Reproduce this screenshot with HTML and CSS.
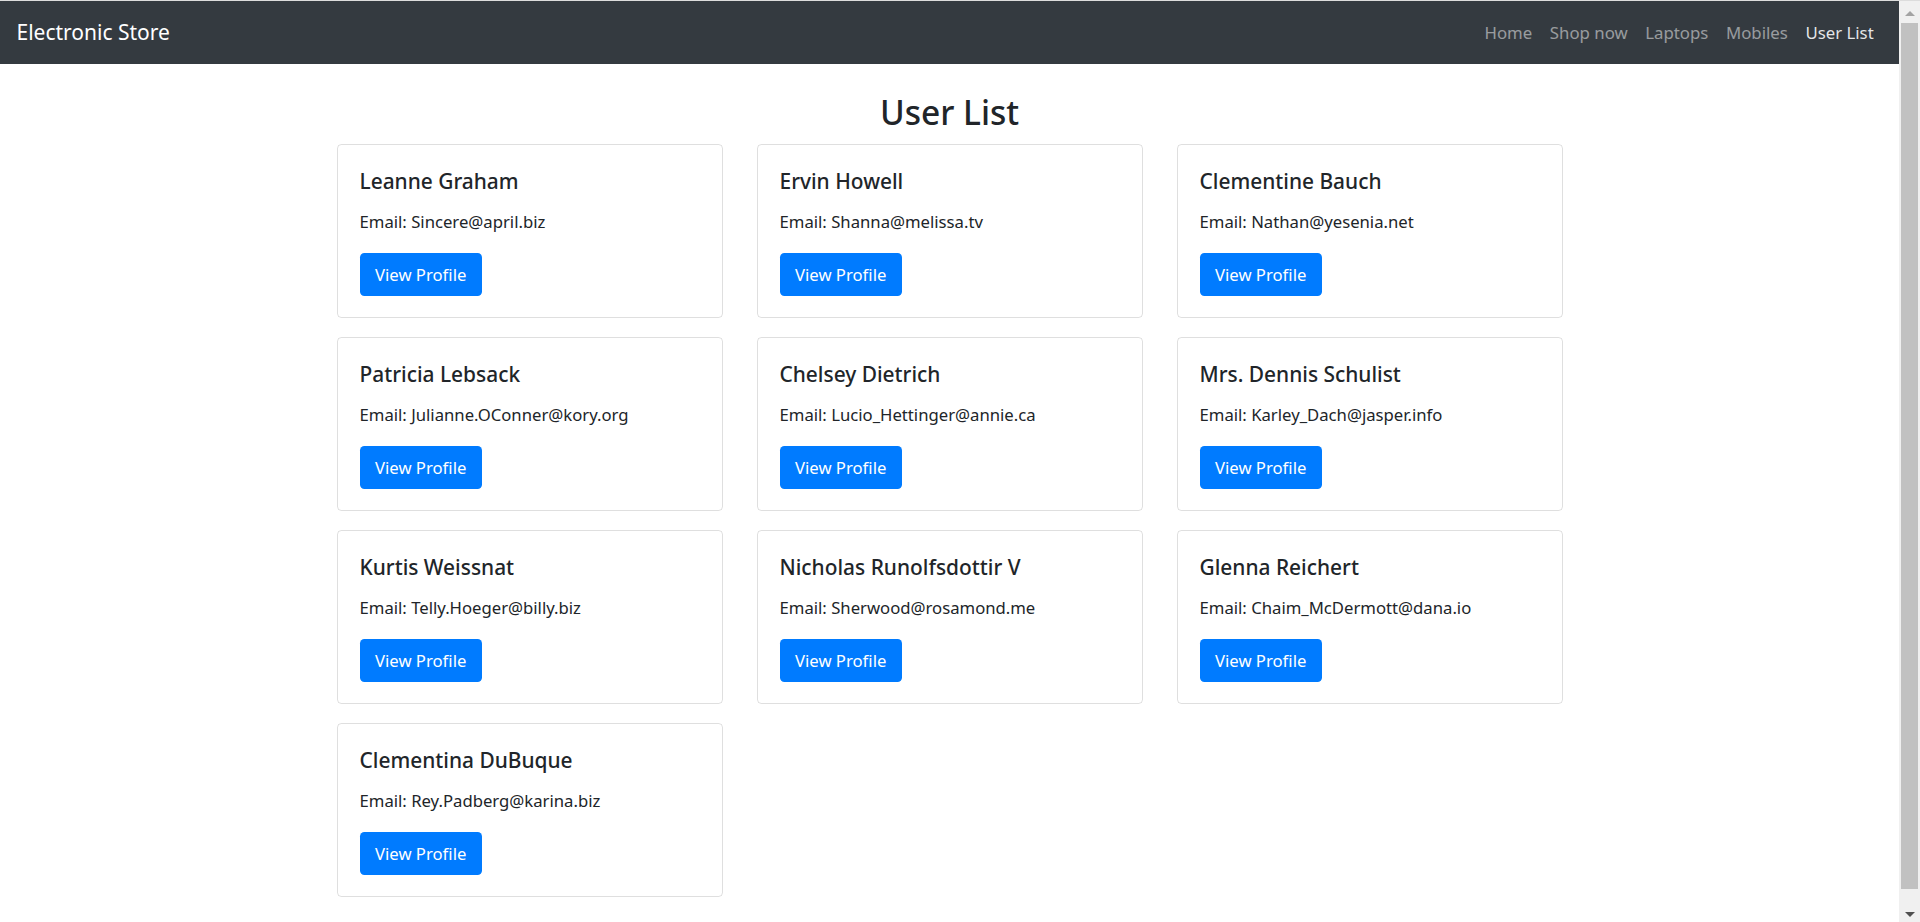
FILE: index.html
```html
<!DOCTYPE html>
<html lang="en">
<head>
<meta charset="utf-8">
<title>Electronic Store</title>
<link rel="stylesheet" href="styles.css">
</head>
<body>
<div class="window">
  <div class="viewport">
    <nav class="navbar">
      <a class="brand" href="#">Electronic Store</a>
      <ul class="nav">
        <li><a class="nav-link" href="#">Home</a></li>
        <li><a class="nav-link" href="#">Shop now</a></li>
        <li><a class="nav-link" href="#">Laptops</a></li>
        <li><a class="nav-link" href="#">Mobiles</a></li>
        <li><a class="nav-link active" href="#">User List</a></li>
      </ul>
    </nav>
    <main class="main">
      <h2 class="title">User List</h2>
      <div class="grid">
        <div class="card"><h5 class="card-title">Leanne Graham</h5><p class="card-text">Email: Sincere@april.biz</p><a class="btn" href="#">View Profile</a></div>
        <div class="card"><h5 class="card-title">Ervin Howell</h5><p class="card-text">Email: Shanna@melissa.tv</p><a class="btn" href="#">View Profile</a></div>
        <div class="card"><h5 class="card-title">Clementine Bauch</h5><p class="card-text">Email: Nathan@yesenia.net</p><a class="btn" href="#">View Profile</a></div>
        <div class="card"><h5 class="card-title">Patricia Lebsack</h5><p class="card-text">Email: Julianne.OConner@kory.org</p><a class="btn" href="#">View Profile</a></div>
        <div class="card"><h5 class="card-title">Chelsey Dietrich</h5><p class="card-text">Email: Lucio_Hettinger@annie.ca</p><a class="btn" href="#">View Profile</a></div>
        <div class="card"><h5 class="card-title">Mrs. Dennis Schulist</h5><p class="card-text">Email: Karley_Dach@jasper.info</p><a class="btn" href="#">View Profile</a></div>
        <div class="card"><h5 class="card-title">Kurtis Weissnat</h5><p class="card-text">Email: Telly.Hoeger@billy.biz</p><a class="btn" href="#">View Profile</a></div>
        <div class="card"><h5 class="card-title">Nicholas Runolfsdottir V</h5><p class="card-text">Email: Sherwood@rosamond.me</p><a class="btn" href="#">View Profile</a></div>
        <div class="card"><h5 class="card-title">Glenna Reichert</h5><p class="card-text">Email: Chaim_McDermott@dana.io</p><a class="btn" href="#">View Profile</a></div>
        <div class="card"><h5 class="card-title">Clementina DuBuque</h5><p class="card-text">Email: Rey.Padberg@karina.biz</p><a class="btn" href="#">View Profile</a></div>
      </div>
    </main>
  </div>
  <div class="scrollbar" aria-hidden="true">
    <div class="sb-btn sb-up"><span class="arrow-up"></span></div>
    <div class="sb-track"><div class="sb-thumb"></div></div>
    <div class="sb-btn sb-down"><span class="arrow-down"></span></div>
  </div>
</div>
</body>
</html>
```
FILE: styles.css
```css
* { box-sizing: border-box; }
html, body { height: 100%; }
body {
  margin: 0;
  overflow: hidden;
  border-top: 1px solid #dcdcdc;
  font-family: "Noto Sans", "Open Sans", sans-serif;
  color: #212529;
  background: #fff;
}
.window {
  display: flex;
  height: calc(100vh - 1px);
}
.viewport {
  flex: 1;
  min-width: 0;
  overflow: hidden;
}

/* scrollbar strip */
.scrollbar {
  width: 21px;
  flex: none;
  background: #f0f0f0;
  display: flex;
  flex-direction: column;
}
.sb-btn {
  height: 21px;
  flex: none;
  display: flex;
  justify-content: center;
}
.sb-up { align-items: flex-start; padding-top: 10px; }
.sb-down { align-items: flex-start; padding-top: 11px; }
.arrow-up {
  width: 0; height: 0;
  border-left: 5px solid transparent;
  border-right: 5px solid transparent;
  border-bottom: 5px solid #a3a3a3;
}
.arrow-down {
  width: 0; height: 0;
  border-left: 5px solid transparent;
  border-right: 5px solid transparent;
  border-top: 5px solid #505050;
}
.sb-track {
  flex: 1;
  padding: 1px 2px 12px;
}
.sb-thumb {
  height: 100%;
  background: #c1c1c1;
}

.navbar {
  height: 63px;
  background: #343a40;
  display: flex;
  align-items: center;
  justify-content: space-between;
  padding: 0 16.5px;
}
.brand {
  color: #fff;
  text-decoration: none;
  font-size: 21px;
  line-height: 33px;
}
.nav {
  list-style: none;
  margin: 0;
  padding: 0;
  display: flex;
}
.nav-link {
  display: block;
  padding: 0 8.8px;
  font-size: 16.8px;
  line-height: 26px;
  color: rgba(255, 255, 255, 0.5);
  text-decoration: none;
}
.nav-link.active { color: rgba(255, 255, 255, 0.88); }

.main { padding: 27px 0 40px; }
.title {
  margin: 0 0 10.5px;
  text-align: center;
  font-size: 33.5px;
  font-weight: 500;
  line-height: 42.2px;
}
.grid {
  width: 1226px;
  margin: 0 auto;
  display: grid;
  grid-template-columns: repeat(3, 386px);
  column-gap: 34px;
  row-gap: 19px;
}
.card {
  border: 1px solid rgba(0, 0, 0, 0.125);
  border-radius: 4.4px;
  padding: 23px 22px 21px;
}
.card-title {
  margin: 0 0 14.5px;
  font-size: 20.9px;
  font-weight: 500;
  line-height: 26.4px;
}
.card-text {
  margin: 0 0 17.7px;
  font-size: 16.7px;
  line-height: 26.4px;
}
.btn {
  display: inline-flex;
  align-items: center;
  height: 43px;
  padding: 0 15.5px;
  background: #007bff;
  color: #fff;
  border-radius: 4.4px;
  font-size: 16.7px;
  text-decoration: none;
}
```
